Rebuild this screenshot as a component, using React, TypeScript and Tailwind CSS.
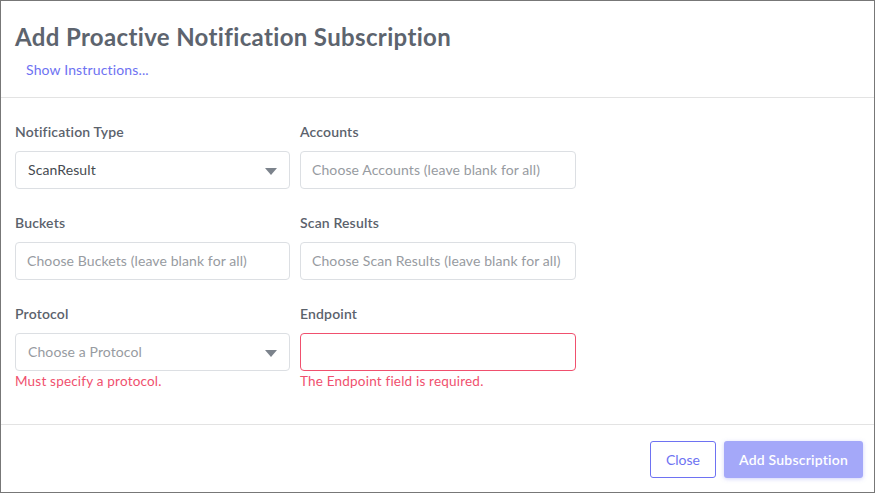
import React from "react";

const font = { fontFamily: "Lato, 'Open Sans', sans-serif" };

function Caret() {
  return (
    <svg width="12" height="7" viewBox="0 0 12 7" className="absolute right-[12px] top-[16px]">
      <path d="M0 0 L12 0 L6 7 Z" fill="#7c838c" />
    </svg>
  );
}

function Label({ children }: { children: React.ReactNode }) {
  return <div className="text-[14px] leading-[20px] font-semibold tracking-[0.15px] text-[#5b626c] mb-[9px]">{children}</div>;
}

function Select({ value, placeholder }: { value?: string; placeholder?: string }) {
  return (
    <div className="relative h-[38px] border border-[#dcdfe3] rounded-[4px] flex items-center pl-[12px] pb-[2px] text-[14px] tracking-[0.1px]">
      {value ? (
        <span className="text-[#454a50]">{value}</span>
      ) : (
        <span className="text-[#979ba1]">{placeholder}</span>
      )}
      <Caret />
    </div>
  );
}

function Input({ placeholder, error }: { placeholder?: string; error?: boolean }) {
  return (
    <div
      className={
        "h-[38px] rounded-[4px] flex items-center pl-[11px] pb-[2px] text-[14px] tracking-[0.1px] " +
        (error ? "border border-[#f0506e]" : "border border-[#dcdfe3]")
      }
    >
      <span className="text-[#979ba1]">{placeholder}</span>
    </div>
  );
}

export default function App() {
  return (
    <div style={font} className="w-[875px] h-[493px] border border-[#777] bg-white flex flex-col">
      <div className="px-[14px] pt-[20px] pb-[17px] border-b border-[#e3e3e3]">
        <h1 className="text-[24px] leading-[32px] font-bold tracking-[0.35px] text-[#5d646e]">Add Proactive Notification Subscription</h1>
        <div className="mt-[7px] pl-[11px] text-[14px] leading-[20px] tracking-[0.15px] text-[#6e72f2]">Show Instructions...</div>
      </div>
      <div className="flex-1 px-[14px] pt-[24px]">
        <div className="grid grid-cols-[275px_276px] gap-x-[10px] gap-y-[24px]">
          <div>
            <Label>Notification Type</Label>
            <Select value="ScanResult" />
          </div>
          <div>
            <Label>Accounts</Label>
            <Input placeholder="Choose Accounts (leave blank for all)" />
          </div>
          <div>
            <Label>Buckets</Label>
            <Input placeholder="Choose Buckets (leave blank for all)" />
          </div>
          <div>
            <Label>Scan Results</Label>
            <Input placeholder="Choose Scan Results (leave blank for all)" />
          </div>
          <div>
            <Label>Protocol</Label>
            <Select placeholder="Choose a Protocol" />
            <div className="mt-[1px] text-[13.5px] leading-[18px] tracking-[0.2px] text-[#f0506e]">Must specify a protocol.</div>
          </div>
          <div>
            <Label>Endpoint</Label>
            <Input error />
            <div className="mt-[1px] text-[13.5px] leading-[18px] tracking-[0.2px] text-[#f0506e]">The Endpoint field is required.</div>
          </div>
        </div>
      </div>
      <div className="border-t border-[#e3e3e3] flex justify-end gap-[8px] pt-[16px] pb-[14px] pr-[11px]">
        <button className="h-[37px] w-[66px] border border-[#6e72f2] rounded-[3px] text-[14px] text-[#6e72f2] bg-white">Close</button>
        <button className="h-[37px] w-[139px] rounded-[3px] text-[14px] font-semibold tracking-[0.2px] text-white bg-[#a4a8f9] shadow-[0_1px_4px_rgba(120,125,240,0.35)]">Add Subscription</button>
      </div>
    </div>
  );
}
